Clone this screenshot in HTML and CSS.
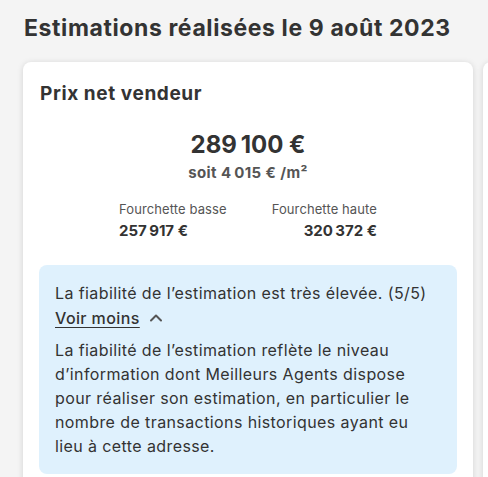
FILE: index.html
```html
<!DOCTYPE html>
<html lang="fr">
<head>
<meta charset="utf-8">
<link rel="stylesheet" href="styles.css">
</head>
<body>
<main class="page">
  <h1 class="title">Estimations réalisées le 9 août 2023</h1>
  <div class="cards">
    <section class="card">
      <h2 class="card-title">Prix net vendeur</h2>
      <div class="price">289&#8239;100 €</div>
      <div class="per-m2">soit 4&#8239;015 € /m²</div>
      <div class="range">
        <div class="range-col">
          <div class="range-label">Fourchette basse</div>
          <div class="range-value">257&#8239;917 €</div>
        </div>
        <div class="range-col right">
          <div class="range-label">Fourchette haute</div>
          <div class="range-value">320&#8239;372 €</div>
        </div>
      </div>
      <div class="info">
        <p class="info-line">La fiabilité de l’estimation est très élevée. (5/5)</p>
        <div class="toggle">
          <span class="toggle-link">Voir moins</span>
          <svg class="chevron" width="16" height="16" viewBox="0 0 16 16"><path d="M3 10.5 L8 5.5 L13 10.5" fill="none" stroke="#555" stroke-width="2" stroke-linecap="round" stroke-linejoin="round"/></svg>
        </div>
        <p class="info-text">La fiabilité de l’estimation reflète le niveau d’information dont Meilleurs Agents dispose pour réaliser son estimation, en particulier le nombre de transactions historiques ayant eu lieu à cette adresse.</p>
      </div>
    </section>
    <section class="card"></section>
  </div>
</main>
</body>
</html>
```

FILE: styles.css
```css
* { box-sizing: border-box; }
html, body { margin: 0; padding: 0; }
body {
  background: #f4f4f4;
  font-family: Inter, "Open Sans", sans-serif;
  color: #333;
  overflow: hidden;
  height: 477px;
}
.page {
  padding: 12px 0 0 23px;
}
.title {
  margin: 0 0 18px 1px;
  font-size: 23px;
  line-height: 32px;
  font-weight: 700;
  letter-spacing: 0.6px;
  color: #333;
  white-space: nowrap;
}
.cards {
  display: flex;
  gap: 10px;
}
.card {
  flex: 0 0 450px;
  background: #fff;
  border-radius: 8px;
  box-shadow: 0 1px 6px rgba(0,0,0,0.14);
  padding: 16px 16px 0;
  height: 430px;
}
.card-title {
  margin: 0;
  font-size: 19px;
  line-height: 32px;
  font-weight: 700;
  letter-spacing: 0.6px;
  padding-left: 1px;
}
.price {
  margin-top: 19px;
  text-align: center;
  font-size: 24px;
  line-height: 32px;
  font-weight: 700;
}
.per-m2 {
  text-align: center;
  font-size: 15px;
  line-height: 24px;
  font-weight: 700;
  letter-spacing: 0.4px;
  color: #555;
}
.range {
  display: flex;
  justify-content: center;
  gap: 45px;
  margin-top: 14px;
}
.range-col { display: flex; flex-direction: column; }
.range-col.right { align-items: flex-end; }
.range-label {
  font-size: 13px;
  line-height: 20px;
  letter-spacing: 0.1px;
  color: #555;
}
.range-value {
  margin-top: 2px;
  font-size: 15px;
  line-height: 20px;
  font-weight: 700;
  letter-spacing: 0.6px;
}
.info {
  margin-top: 24px;
  background: #dff1fd;
  border-radius: 8px;
  padding: 16px 16px 16px;
  font-size: 16px;
  line-height: 24px;
  letter-spacing: 0.4px;
  color: #333;
}
.info p { margin: 0; }
.toggle {
  display: flex;
  align-items: center;
  gap: 8px;
  height: 24px;
  margin-top: 1px;
}
.toggle-link {
  font-weight: 500;
  text-decoration: underline;
  text-underline-offset: 3px;
}
.info-text { margin-top: 8px !important; }
```
